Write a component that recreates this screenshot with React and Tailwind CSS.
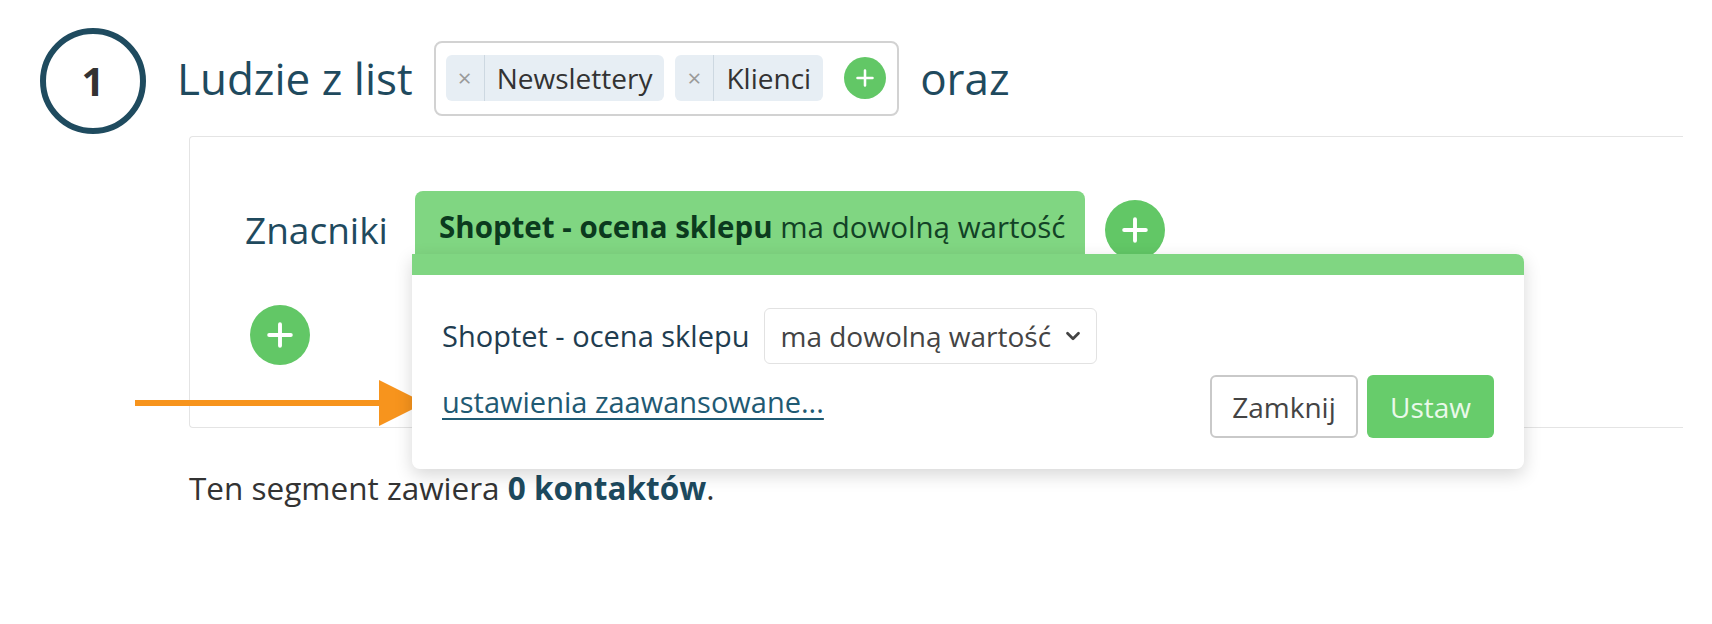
import { ChevronDown } from "lucide-react";

function Plus({ bar, thick }) {
  return (
    <svg width={bar} height={bar} viewBox="0 0 24 24" fill="none">
      <path d="M12 2v20M2 12h20" stroke="white" strokeWidth={thick} strokeLinecap="round" />
    </svg>
  );
}

function AddButton({ size = "w-[60px] h-[60px]", bar = 26, thick = 3.6 }) {
  return (
    <div className={`${size} rounded-full bg-[#62c766] flex items-center justify-center shrink-0`}>
      <Plus bar={bar} thick={thick} />
    </div>
  );
}

function Tag({ label }) {
  return (
    <div className="h-[46px] flex items-stretch rounded-[6px] bg-[#e7eef4]">
      <div className="w-[39px] flex items-center justify-center border-r border-[#cdd8e1] text-[#9a9a9a] text-[24px]">
        ×
      </div>
      <div className="flex items-center px-3 text-[28px] text-[#333]">{label}</div>
    </div>
  );
}

export default function App() {
  return (
    <div
      className="w-[1712px] h-[624px] bg-white relative overflow-hidden"
      style={{ fontFamily: '"Open Sans", "Liberation Sans", sans-serif' }}
    >
      {/* Step header */}
      <div className="flex items-center pl-[40px] pt-[28px]">
        <div className="w-[106px] h-[106px] rounded-full border-[6px] border-[#1f4b5f] flex items-center justify-center">
          <span className="text-[40px] font-bold text-[#333] leading-none">1</span>
        </div>
        <div className="ml-[31px] mb-[6px] text-[44px] text-[#1f4a5e] leading-none">Ludzie z list</div>
        <div className="ml-[21px] mb-[6px] h-[75px] flex items-center gap-[11px] pl-[10px] pr-[11px] border-2 border-[#d2d2d2] rounded-[8px]">
          <Tag label="Newslettery" />
          <Tag label="Klienci" />
          <div className="ml-[10px]">
            <AddButton size="w-[42px] h-[42px]" bar={18} thick={3.4} />
          </div>
        </div>
        <div className="ml-[21px] mb-[6px] text-[44px] text-[#1f4a5e] leading-none">oraz</div>
      </div>

      {/* Conditions card */}
      <div className="ml-[189px] mt-[2px] w-[1494px] h-[292px] border border-r-0 border-[#e4e4e4] rounded-l-[4px] pl-[55px] pt-[54px]">
        <div className="flex items-end h-[63px]">
          <div className="w-[170px] text-[37px] text-[#1f4a5e] leading-[49px]">Znacniki</div>
          <div className="relative h-[63px]">
            <div className="h-[63px] bg-[#80d682] rounded-t-[8px] pl-6 pr-[20px] pt-[16px] text-[29.5px] leading-[40px] text-[#124226] whitespace-nowrap">
              <span className="font-bold text-[#0b3a1e]">Shoptet - ocena sklepu</span> ma dowolną wartość
            </div>
            {/* Dropdown */}
            <div className="absolute left-[-3px] top-[63px] w-[1112px] z-10 rounded-tr-[8px] rounded-b-[8px] bg-white shadow-[0_6px_18px_rgba(0,0,0,0.16)] overflow-hidden">
              <div className="h-[21px] bg-[#80d682]" />
              <div className="px-[30px] pt-[33px] pb-[31px]">
                <div className="flex items-center h-[56px]">
                  <div className="text-[29px] text-[#1f3d50] whitespace-nowrap">Shoptet - ocena sklepu</div>
                  <div className="ml-[15px] w-[333px] h-[56px] shrink-0 border border-[#e2e2e2] rounded-[6px] flex items-center justify-between pl-[15px] pr-[12px]">
                    <span className="text-[28px] text-[#444] whitespace-nowrap">ma dowolną wartość</span>
                    <ChevronDown size={22} strokeWidth={3} className="text-[#444] shrink-0" />
                  </div>
                </div>
                <div className="flex justify-between items-start mt-[11px]">
                  <a className="mt-[7px] text-[29px] leading-[40px] text-[#1f5a73] underline underline-offset-[5px] decoration-[2px]">
                    ustawienia zaawansowane...
                  </a>
                  <div className="flex gap-[9px]">
                    <button className="w-[148px] h-[63px] rounded-[6px] border-2 border-[#c9c9c9] bg-white text-[28px] text-[#444]">
                      Zamknij
                    </button>
                    <button className="w-[127px] h-[63px] rounded-[6px] bg-[#67cc6b] text-[28px] text-[#eaf9ea]">
                      Ustaw
                    </button>
                  </div>
                </div>
              </div>
            </div>
          </div>
          <div className="ml-[20px] mb-[-6px]">
            <AddButton />
          </div>
        </div>
        <div className="mt-[51px] ml-[5px]">
          <AddButton />
        </div>
      </div>

      <div className="ml-[189px] mt-[39px] text-[31.5px] leading-[41px] text-[#333]">
        Ten segment zawiera <span className="font-bold text-[#1d4a5e]">0 kontaktów</span>.
      </div>

      {/* Annotation arrow */}
      <svg className="absolute left-[135px] top-[379px]" width="292" height="48" viewBox="0 0 292 48">
        <rect x="0" y="21" width="250" height="6" fill="#f7941d" />
        <polygon points="244,1 290,24 244,47" fill="#f7941d" />
      </svg>
    </div>
  );
}
